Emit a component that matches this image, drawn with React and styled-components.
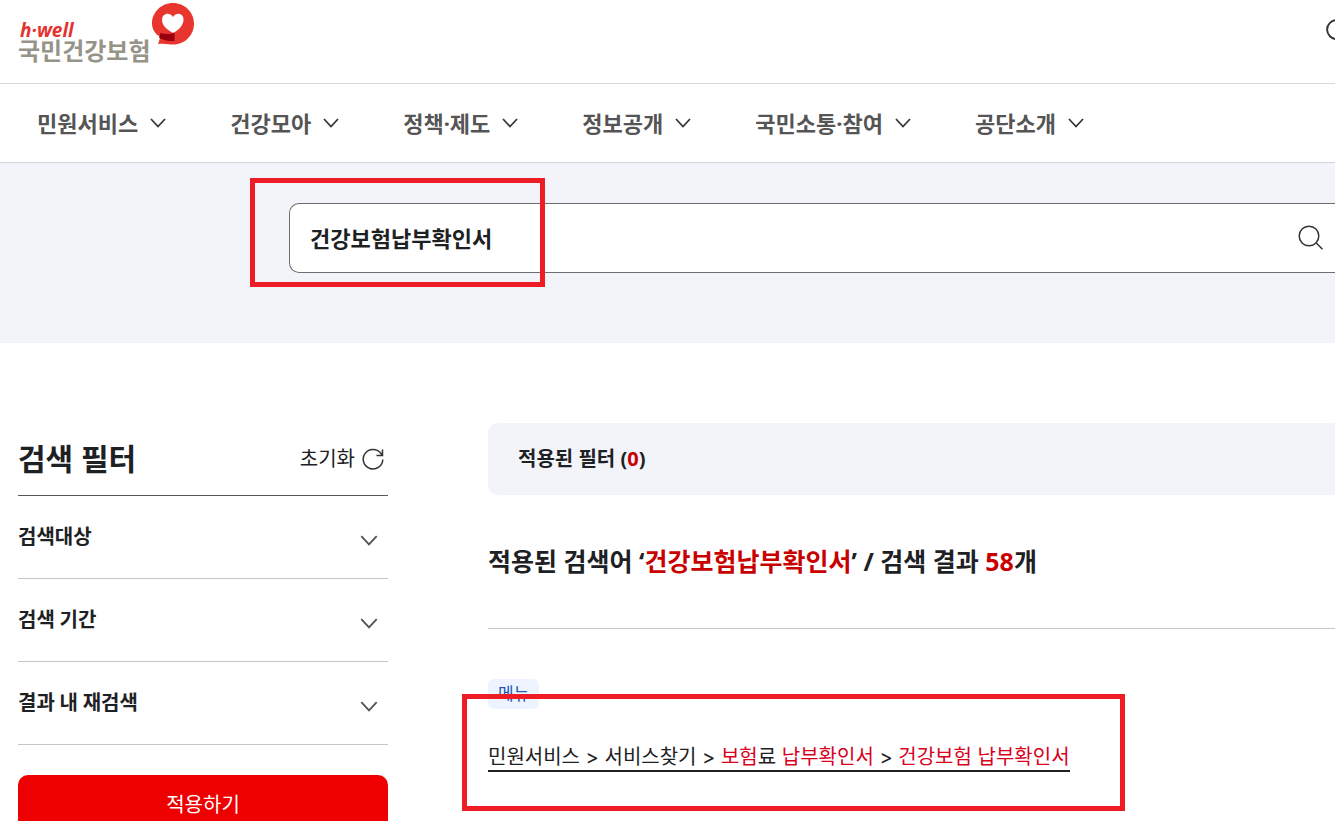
import React from "react";
import styled, { createGlobalStyle } from "styled-components";

const GlobalStyle = createGlobalStyle`
  * { box-sizing: border-box; }
  body {
    margin: 0;
    background: #fff;
    color: #1e2124;
    font-family: Inter, "Noto Sans CJK KR", sans-serif;
  }
  button, input { font: inherit; color: inherit; }
  h1, h2, p, ul { margin: 0; padding: 0; }
`;

const displayFont = `"Noto Sans", "Noto Sans CJK KR", sans-serif`;

const Page = styled.div`
  height: 100vh;
  overflow: hidden;
`;

const Header = styled.header`
  display: flex;
  justify-content: space-between;
  height: 84px;
  padding-left: 18px;
  border-bottom: 1px solid #d8d8d8;
`;

const Logo = styled.a`
  display: flex;
  align-items: flex-start;
  text-decoration: none;
`;

const LogoWords = styled.span`
  display: flex;
  flex-direction: column;
  padding-top: 20px;
`;

const LogoEnglish = styled.span`
  padding-left: 2px;
  font: italic 700 19px/20px "Open Sans", sans-serif;
  color: #e5332f;
`;

const LogoKorean = styled.span`
  font-size: 24px;
  line-height: 24px;
  font-weight: 700;
  color: #969388;
`;

const LogoMark = styled.svg`
  width: 42px;
  height: 43px;
  margin: 3px 0 0 2px;
`;

const HeaderSearch = styled.button`
  display: flex;
  margin: 18px -17px 0 0;
  padding: 0;
  align-self: flex-start;
  border: 0;
  background: none;
`;

const Nav = styled.nav`
  display: flex;
  gap: 64px;
  height: 79px;
  padding-left: 37px;
  border-bottom: 1px solid #d4d5da;
`;

const NavButton = styled.button`
  display: flex;
  align-items: center;
  gap: 12px;
  padding: 0;
  border: 0;
  background: none;
  font-family: ${displayFont};
  font-size: 22px;
  line-height: 32px;
  font-weight: 700;
  color: #555;
  white-space: nowrap;
`;

const SearchBand = styled.section`
  position: relative;
  padding: 40px 0 70px 289px;
  background: #f3f4fa;
`;

const SearchBox = styled.form`
  display: flex;
  align-items: center;
  height: 70px;
  padding: 0 10px 0 20px;
  border: 1px solid #6d6d70;
  border-right: 0;
  border-radius: 10px 0 0 10px;
  background: #fff;
`;

const SearchInput = styled.input`
  flex: 1;
  min-width: 0;
  padding: 0;
  border: 0;
  outline: 0;
  background: none;
  font-family: ${displayFont};
  font-size: 22px;
  line-height: 32px;
  font-weight: 700;
`;

const IconButton = styled.button`
  display: flex;
  padding: 0;
  border: 0;
  background: none;
`;

const Highlight = styled.div`
  position: absolute;
  border: 5px solid #ee1c25;
  pointer-events: none;
`;

const SearchHighlight = styled(Highlight)`
  top: 15px;
  left: 250px;
  width: 295px;
  height: 109px;
`;

const ResultHighlight = styled(Highlight)`
  top: 15px;
  left: -26px;
  width: 663px;
  height: 117px;
`;

const Content = styled.main`
  display: grid;
  grid-template-columns: 370px minmax(0, 1fr);
  gap: 100px;
  padding: 80px 0 0 18px;
`;

const FilterHeader = styled.div`
  display: flex;
  align-items: center;
  justify-content: space-between;
  height: 73px;
  padding-right: 4px;
  border-bottom: 1px solid #58585b;
`;

const FilterTitle = styled.h2`
  font-family: ${displayFont};
  font-size: 30px;
  line-height: 44px;
  font-weight: 700;
`;

const ResetButton = styled.button`
  display: flex;
  align-items: center;
  gap: 7px;
  padding: 0;
  border: 0;
  background: none;
  font-size: 20px;
  line-height: 30px;
`;

const FilterRow = styled.button`
  display: flex;
  align-items: center;
  justify-content: space-between;
  width: 100%;
  height: 83px;
  padding: 0 10px 0 0;
  border: 0;
  border-bottom: 1px solid #c6c6c8;
  background: none;
  font-size: 20px;
  line-height: 30px;
  font-weight: 700;

  svg { margin-top: 6px; }
`;

const ApplyButton = styled.button`
  width: 100%;
  height: 60px;
  margin-top: 30px;
  padding: 0;
  border: 0;
  border-radius: 10px;
  background: #ef0000;
  color: #fff;
  font-size: 20px;
  line-height: 30px;
`;

const AppliedFilters = styled.p`
  display: flex;
  align-items: center;
  height: 72px;
  padding-left: 30px;
  border-radius: 10px 0 0 10px;
  background: #f3f4fa;
  font-family: ${displayFont};
  font-size: 20px;
  line-height: 30px;
  font-weight: 700;
  white-space: pre;
`;

const Accent = styled.span`
  color: #c90000;
`;

const ResultTitle = styled.h1`
  padding: 47px 0 48px;
  border-bottom: 1px solid #c6c6c8;
  font-family: ${displayFont};
  font-size: 25px;
  line-height: 38px;
  font-weight: 700;
`;

const Result = styled.article`
  position: relative;
  display: flex;
  flex-direction: column;
  align-items: flex-start;
  gap: 36px;
  margin-top: 50px;
`;

const Tag = styled.span`
  padding: 0 10px;
  border-radius: 6px;
  background: #edf4ff;
  color: #2159b5;
  font-size: 17px;
  line-height: 30px;
`;

const ResultLink = styled.a`
  border-bottom: 2px solid #1e2124;
  color: #1e2124;
  font-size: 20px;
  line-height: 25px;
  text-decoration: none;
  white-space: nowrap;
`;

const Match = styled.mark`
  background: none;
  color: #d9001d;
`;

function Chevron({ width, height, color }) {
  return (
    <svg width={width} height={height} viewBox="0 0 16 10" fill="none" stroke={color} strokeWidth="1.7" aria-hidden="true">
      <path d="M1 1 8 8.5 15 1" />
    </svg>
  );
}

function SearchIcon({ size, strokeWidth }) {
  return (
    <svg width={size} height={size} viewBox="0 0 28 28" fill="none" stroke="#333" strokeWidth={strokeWidth} aria-hidden="true">
      <circle cx="12" cy="12" r="9.8" />
      <path d="m19 18.800 6.500 6.500" />
    </svg>
  );
}

const menus = ["민원서비스", "건강모아", "정책·제도", "정보공개", "국민소통·참여", "공단소개"];
const filters = ["검색대상", "검색 기간", "결과 내 재검색"];

export default function App() {
  return (
    <Page>
      <GlobalStyle />
      <Header>
        <Logo href="#">
          <LogoWords>
            <LogoEnglish>h·well</LogoEnglish>
            <LogoKorean>국민건강보험</LogoKorean>
          </LogoWords>
          <LogoMark viewBox="0 0 42 43" aria-hidden="true">
            <path d="M21 0C32.500 0 42 9 42 20.500C42 32 33 41.500 21.500 41.500C17 41.500 12 40 6 41L8.500 34C3 31 0 26 0 20.500C0 9 9.500 0 21 0Z" fill="#e8352e" />
            <path d="M21 30C14 26 10 22 10 17C10 10 18 8.500 21 14C24.500 8.500 32 10.500 31.500 17C31 23 26.500 27.500 21 30Z" fill="#fff" />
            <path d="M8.500 30C13 31.500 18 31.500 22.500 29.500V38C17.500 38.500 12 37.500 7 35Z" fill="#98000d" />
          </LogoMark>
        </Logo>
        <HeaderSearch type="button" aria-label="통합검색">
          <SearchIcon size={27} strokeWidth="2" />
        </HeaderSearch>
      </Header>

      <Nav aria-label="주메뉴">
        {menus.map((name) => (
          <NavButton type="button" key={name}>
            {name}
            <Chevron width={16} height={10} color="#333" />
          </NavButton>
        ))}
      </Nav>

      <SearchBand>
        <SearchBox role="search">
          <SearchInput type="text" aria-label="검색어" defaultValue="건강보험납부확인서" />
          <IconButton type="button" aria-label="검색">
            <SearchIcon size={28} strokeWidth="1.5" />
          </IconButton>
        </SearchBox>
        <SearchHighlight />
      </SearchBand>

      <Content>
        <aside>
          <FilterHeader>
            <FilterTitle>검색 필터</FilterTitle>
            <ResetButton type="button">
              초기화
              <svg width="22" height="22" viewBox="0 0 22 22" fill="none" stroke="#333" strokeWidth="1.500" aria-hidden="true">
                <path d="M20.800 11.500A9.800 9.800 0 1 1 18.600 5L20.500 7.200M20.500 1.500V7.500H14.500" />
              </svg>
            </ResetButton>
          </FilterHeader>
          {filters.map((name) => (
            <FilterRow type="button" key={name}>
              {name}
              <Chevron width={18} height={11} color="#555" />
            </FilterRow>
          ))}
          <ApplyButton type="button">적용하기</ApplyButton>
        </aside>

        <section>
          <AppliedFilters>
            적용된 필터 (<Accent>0</Accent>)
          </AppliedFilters>
          <ResultTitle>
            적용된 검색어 ‘<Accent>건강보험납부확인서</Accent>’ / 검색 결과 <Accent>58</Accent>개
          </ResultTitle>
          <Result>
            <Tag>메뉴</Tag>
            <ResultLink href="#">
              민원서비스 &gt; 서비스찾기 &gt; <Match>보험</Match>료 <Match>납부확인서</Match> &gt; <Match>건강보험</Match> <Match>납부확인서</Match>
            </ResultLink>
            <ResultHighlight />
          </Result>
        </section>
      </Content>
    </Page>
  );
}
